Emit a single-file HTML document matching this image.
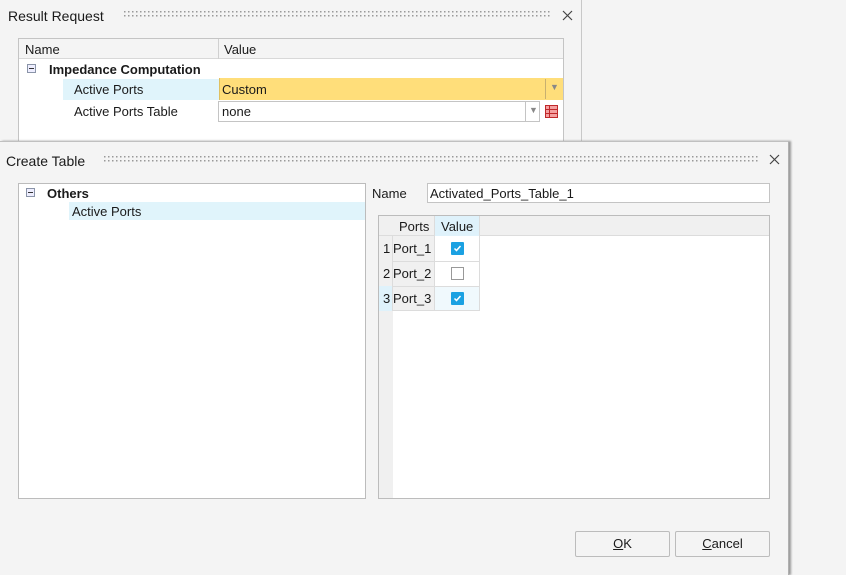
<!DOCTYPE html>
<html><head><style>
*{box-sizing:border-box;margin:0;padding:0}
body{width:846px;height:575px;background:#f4f4f4;position:relative;overflow:hidden;font-family:"Liberation Sans",Arial,sans-serif;font-size:13px;color:#1a1a1a}
.a{position:absolute}
.dots{position:absolute;height:6px;background-image:linear-gradient(90deg,#999 1.5px,transparent 1.5px),linear-gradient(#0000 0,#0000 0);background-size:4px 4px;-webkit-mask:linear-gradient(#000 0 1.5px,transparent 1.5px 4px,#000 4px 5.5px,transparent 5.5px)}
.x{position:absolute;width:11px;height:11px}
.ck{position:absolute;width:13px;height:13px;background:#1ba1e2;border-radius:1px}
.ck svg{position:absolute;left:2px;top:2px}
.cb{position:absolute;width:13px;height:13px;border:1px solid #999;background:#fff}
.btn{position:absolute;height:26px;border:1px solid #bcbcbc;border-radius:2px;background:#f4f4f4;text-align:center;line-height:24px;font-size:13px}
</style></head><body>
<!-- back dialog -->
<div class="a" style="left:0;top:0;width:582px;height:141px;background:#f4f4f4;border-right:1px solid #c8c8c8"></div>
<div class="a" style="left:8px;top:8px;font-size:14px">Result Request</div>
<div class="dots" style="left:124px;top:11px;width:428px"></div>
<svg class="x" style="left:562px;top:10px" viewBox="0 0 11 11"><path d="M1 1L10 10M10 1L1 10" stroke="#444" stroke-width="1.2"/></svg>
<div class="a" style="left:18px;top:38px;width:546px;height:103px;background:#fff;border:1px solid #c4c4c4;border-bottom:none"></div>
<div class="a" style="left:19px;top:39px;width:544px;height:20px;background:#f4f4f4;border-bottom:1px solid #d8d8d8"></div>
<div class="a" style="left:218px;top:39px;width:1px;height:20px;background:#d0d0d0"></div>
<div class="a" style="left:25px;top:42px">Name</div>
<div class="a" style="left:224px;top:42px">Value</div>
<div class="a" style="left:27px;top:64px;width:9px;height:9px;border:1px solid #8a94a8;background:#eef"><div class="a" style="left:1px;top:3px;width:5px;height:1px;background:#333"></div></div>
<div class="a" style="left:49px;top:62px;font-weight:bold">Impedance Computation</div>
<div class="a" style="left:63px;top:79px;width:156px;height:21px;background:#e0f4fb"></div>
<div class="a" style="left:74px;top:82px">Active Ports</div>
<div class="a" style="left:219px;top:78px;width:344px;height:22px;background:#ffde7a;border-left:1px solid #e0c060"></div>
<div class="a" style="left:545px;top:79px;width:1px;height:20px;background:#c8b070"></div>
<div class="a" style="left:550px;top:82px;font-size:9px;color:#888">▼</div>
<div class="a" style="left:222px;top:82px">Custom</div>
<div class="a" style="left:74px;top:104px">Active Ports Table</div>
<div class="a" style="left:218px;top:101px;width:322px;height:21px;background:#fff;border:1px solid #c4c4c4"></div>
<div class="a" style="left:525px;top:101px;width:1px;height:21px;background:#c4c4c4"></div>
<div class="a" style="left:529px;top:105px;font-size:9px;color:#888">▼</div>
<div class="a" style="left:222px;top:104px">none</div>
<svg class="a" style="left:545px;top:105px" width="13" height="13"><rect x="0.5" y="0.5" width="12" height="12" fill="#f4a0a0" stroke="#c0282a"/><path d="M0 4.5H13M0 8.5H13M4.5 0V13" stroke="#c0282a"/></svg>
<!-- front dialog -->
<div class="a" style="left:0;top:141px;width:789px;height:434px;background:#f4f4f4;border-top:1px solid #c0c0c0;border-right:1px solid #b0b0b0;box-shadow:2px 0 2px #999"></div>
<div class="a" style="left:6px;top:153px;font-size:14px">Create Table</div>
<div class="dots" style="left:104px;top:156px;width:656px"></div>
<svg class="x" style="left:769px;top:154px" viewBox="0 0 11 11"><path d="M1 1L10 10M10 1L1 10" stroke="#444" stroke-width="1.2"/></svg>
<div class="a" style="left:18px;top:183px;width:348px;height:316px;background:#fff;border:1px solid #bcbcbc"></div>
<div class="a" style="left:26px;top:188px;width:9px;height:9px;border:1px solid #8a94a8;background:#eef"><div class="a" style="left:1px;top:3px;width:5px;height:1px;background:#333"></div></div>
<div class="a" style="left:47px;top:186px;font-weight:bold">Others</div>
<div class="a" style="left:69px;top:202px;width:296px;height:18px;background:#e0f4fb"></div>
<div class="a" style="left:72px;top:204px">Active Ports</div>
<div class="a" style="left:372px;top:186px">Name</div>
<div class="a" style="left:427px;top:183px;width:343px;height:20px;background:#fff;border:1px solid #c4c4c4"></div>
<div class="a" style="left:430px;top:186px">Activated_Ports_Table_1</div>
<div class="a" style="left:378px;top:215px;width:392px;height:284px;background:#fff;border:1px solid #bcbcbc"></div>
<div class="a" style="left:379px;top:216px;width:14px;height:282px;background:#f0f0f0"></div>
<div class="a" style="left:379px;top:216px;width:390px;height:20px;background:#f0f0f0;border-bottom:1px solid #dcdcdc"></div>
<div class="a" style="left:434px;top:216px;width:46px;height:20px;background:#dff2fb;border-left:1px solid #dcdcdc;border-right:1px solid #dcdcdc"></div>
<div class="a" style="left:399px;top:219px">Ports</div>
<div class="a" style="left:441px;top:219px">Value</div>
<div class="a" style="left:392px;top:236px;width:42px;height:75px;background:#f0f0f0"></div>
<div class="a" style="left:379px;top:286px;width:14px;height:25px;background:#dff2fb"></div>
<div class="a" style="left:434px;top:286px;width:46px;height:25px;background:#f0f9fd"></div>
<div class="a" style="left:392px;top:236px;width:88px;height:75px;border-left:1px solid #dcdcdc;border-right:1px solid #dcdcdc;border-bottom:1px solid #dcdcdc"></div>
<div class="a" style="left:392px;top:261px;width:88px;height:1px;background:#dcdcdc"></div>
<div class="a" style="left:392px;top:286px;width:88px;height:1px;background:#dcdcdc"></div>
<div class="a" style="left:434px;top:236px;width:1px;height:75px;background:#dcdcdc"></div>
<div class="a" style="left:383px;top:241px">1</div><div class="a" style="left:393px;top:241px">Port_1</div>
<div class="a" style="left:383px;top:266px">2</div><div class="a" style="left:393px;top:266px">Port_2</div>
<div class="a" style="left:383px;top:291px">3</div><div class="a" style="left:393px;top:291px">Port_3</div>
<div class="ck" style="left:451px;top:242px"><svg width="9" height="9"><path d="M1.5 4.5L3.5 6.5L7.5 2" stroke="#fff" stroke-width="1.5" fill="none"/></svg></div>
<div class="cb" style="left:451px;top:267px"></div>
<div class="ck" style="left:451px;top:292px"><svg width="9" height="9"><path d="M1.5 4.5L3.5 6.5L7.5 2" stroke="#fff" stroke-width="1.5" fill="none"/></svg></div>
<div class="btn" style="left:575px;top:531px;width:95px"><u>O</u>K</div>
<div class="btn" style="left:675px;top:531px;width:95px"><u>C</u>ancel</div>
</body></html>
